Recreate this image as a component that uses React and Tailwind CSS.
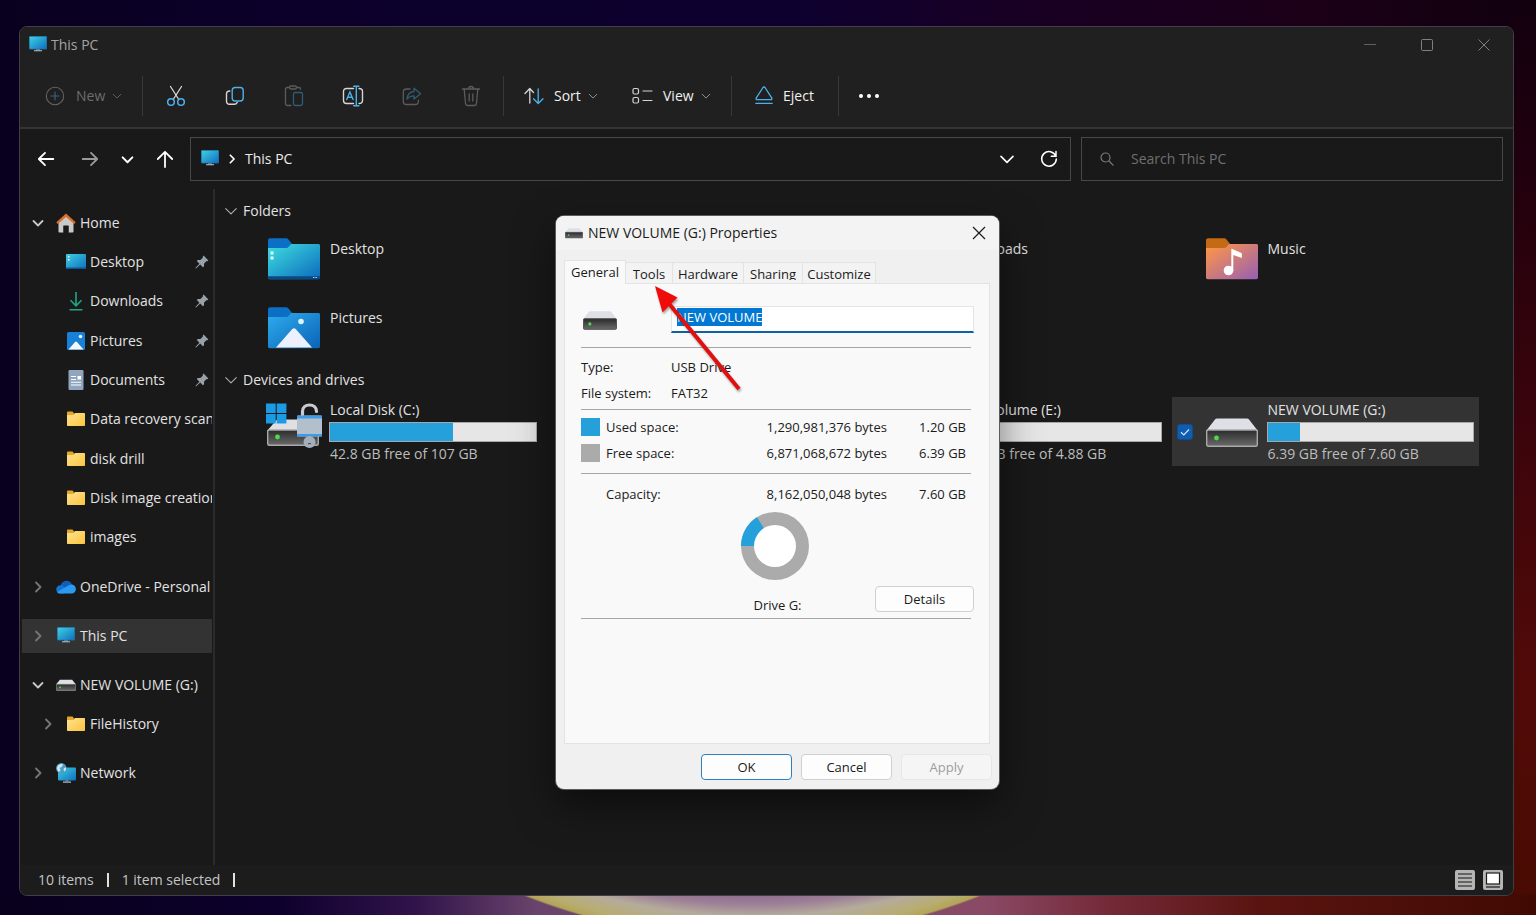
import React, { useEffect, useRef } from "react";

/* ---------- line icons ---------- */

const Chevron = ({ dir = "down", size = 12, width = 1, className = "" }) => (
  <svg
    width={size}
    height={size}
    viewBox="0 0 12 12"
    fill="none"
    stroke="currentColor"
    strokeWidth={width}
    strokeLinecap="round"
    strokeLinejoin="round"
    className={"shrink-0 " + className}
  >
    {dir === "down" ? <path d="M1.500 4 6 8.500 10.500 4" /> : <path d="M4 1.500 8.500 6 4 10.500" />}
  </svg>
);

const NewIcon = () => (
  <svg width="20" height="20" viewBox="0 0 20 20" fill="none">
    <circle cx="10" cy="10" r="8.700" stroke="#636363" strokeWidth="1.100" />
    <path d="M10 6v8M6 10h8" stroke="#35637d" strokeWidth="1.200" strokeLinecap="round" />
  </svg>
);

const CutIcon = () => (
  <svg width="20" height="22" viewBox="0 0 20 22" fill="none" strokeWidth="1.300" strokeLinecap="round">
    <path d="M4.500 1.500 12.800 14.500M15.500 1.500 7.200 14.500" stroke="#d6d6d6" />
    <circle cx="5" cy="17" r="3.300" stroke="#4cb1ea" strokeWidth="1.500" />
    <circle cx="15" cy="17" r="3.300" stroke="#4cb1ea" strokeWidth="1.500" />
  </svg>
);

const CopyIcon = () => (
  <svg width="20" height="20" viewBox="0 0 20 20" fill="none" strokeWidth="1.400" strokeLinecap="round">
    <path d="M4.800 5C2.500 5 1.500 6.200 1.500 8v7c0 2 1 3.300 3.200 3.300h4.500c1.500 0 2.500-.600 3-1.800" stroke="#d6d6d6" />
    <rect x="7.200" y="1.500" width="11" height="13.500" rx="3" stroke="#4cb1ea" />
  </svg>
);

const PasteIcon = () => (
  <svg width="20" height="22" viewBox="0 0 20 22" fill="none" strokeWidth="1.300" strokeLinecap="round">
    <path d="M5.500 2.500H3.300c-1 0-1.800.800-1.800 1.800v14.400c0 1 .800 1.800 1.800 1.800H7M12.500 2.500h2.200c1 0 1.800.800 1.800 1.800" stroke="#5c5c5c" />
    <rect x="5.500" y="1" width="7" height="3" rx="1.400" stroke="#5c5c5c" />
    <rect x="9.500" y="7.500" width="9" height="13" rx="1.800" stroke="#2f5b74" />
  </svg>
);

const RenameIcon = () => (
  <svg width="22" height="22" viewBox="0 0 22 22" fill="none" strokeWidth="1.400" strokeLinecap="round">
    <path d="M11.500 3.500H4.500c-1.800 0-3 1.200-3 3v9c0 1.800 1.200 3 3 3h7M17 3.500c2.300 0 3.500 1.200 3.500 3v9c0 1.800-1.200 3-3.500 3" stroke="#d6d6d6" />
    <path d="M11.700 1.300h5.200M14.300 1.300v19.400M11.700 20.700h5.200M4.700 14.600 7.900 7l3.200 7.600M5.700 12.300h4.400" stroke="#4cb1ea" />
  </svg>
);

const ShareIcon = () => (
  <svg width="20" height="20" viewBox="0 0 20 20" fill="none" strokeWidth="1.300" strokeLinecap="round" strokeLinejoin="round">
    <path d="M8 3H4.500c-2 0-3.200 1.200-3.200 3.200v9c0 2 1.200 3.300 3.200 3.300h8.700c2 0 3.200-1.300 3.200-3.300v-1" stroke="#5c5c5c" />
    <path d="M12 2.200 18.600 7.700 12 13v-3.100c-3 0-5.300 1-7 3.300.300-4.500 2.800-7.300 7-7.700z" stroke="#2f5b74" />
  </svg>
);

const TrashIcon = () => (
  <svg width="20" height="22" viewBox="0 0 20 22" fill="none" stroke="#5c5c5c" strokeWidth="1.300" strokeLinecap="round" strokeLinejoin="round">
    <path d="M1.500 4h17M7.500 3.800c0-1.500 1-2.300 2.500-2.300s2.500.800 2.500 2.300M3.200 4.300l1.300 14.200c.100 1.200.900 2 2 2h7c1.100 0 1.900-.800 2-2l1.300-14.200M8.200 9v7M11.800 9v7" />
  </svg>
);

const SortIcon = () => (
  <svg width="20" height="18" viewBox="0 0 20 18" fill="none" strokeWidth="1.300" strokeLinecap="round" strokeLinejoin="round">
    <path d="M5.800 16V2M1 6.500 5.800 1.500 9.500 5.500" stroke="#d6d6d6" />
    <path d="M14.200 2v14M9.500 11.800l4.700 4.700 4.800-4.700" stroke="#4cb1ea" />
  </svg>
);

const ViewIcon = () => (
  <svg width="21" height="18" viewBox="0 0 21 18" fill="none" stroke="#d6d6d6" strokeWidth="1.200" strokeLinecap="round">
    <rect x="1" y="1.500" width="5.500" height="5.500" rx="1.500" />
    <rect x="1" y="10.500" width="5.500" height="5.500" rx="1.500" />
    <path d="M11 4h9M11 13.500h9" />
  </svg>
);

const EjectIcon = () => (
  <svg width="18" height="20" viewBox="0 0 18 20" fill="none" stroke="#4cb1ea" strokeWidth="1.300" strokeLinecap="round" strokeLinejoin="round">
    <path d="M8 1.500 1.300 11.800c-.600 1 0 1.900 1 1.900h13.400c1 0 1.600-.900 1-1.900L10 1.500c-.500-.700-1.500-.700-2 0zM.800 17.300h16.400" />
  </svg>
);

const ArrowIcon = ({ dir }) => (
  <svg width="18" height="18" viewBox="0 0 18 18" fill="none" stroke="currentColor" strokeWidth="1.800" strokeLinecap="round" strokeLinejoin="round">
    {dir === "left" && <path d="M16.300 9H2M8 2.800 1.800 9 8 15.200" />}
    {dir === "right" && <path d="M1.700 9H16M10 2.800 16.200 9 10 15.200" />}
    {dir === "up" && <path d="M9 17V2M1.800 9 9 1.800 16.200 9" />}
  </svg>
);

const RefreshIcon = () => (
  <svg width="18" height="18" viewBox="0 0 18 18" fill="none" stroke="currentColor" strokeWidth="1.500" strokeLinecap="round">
    <path d="M15.800 6.200A7.300 7.300 0 1 0 16.300 9M16 1.500v4.800h-4.700" />
  </svg>
);

const SearchIcon = () => (
  <svg width="14" height="14" viewBox="0 0 14 14" fill="none" stroke="#7a7a7a" strokeWidth="1.200" strokeLinecap="round">
    <circle cx="5.500" cy="5.500" r="4.500" />
    <path d="m9 9 4 4.200" />
  </svg>
);

const PinIcon = () => (
  <svg width="14" height="14" viewBox="0 0 14 14" className="shrink-0" fill="#98a1a8">
    <path d="M8.600.600 13.400 5.400l-1.200.900-.900-.100L9 8.700l.100 2.500-1.200 1L5.200 9.600 1 13.600.400 13l4-4.200L1.800 6.100l1-1.200 2.500.100 2.500-2.300-.100-.900z" />
  </svg>
);

/* ---------- colour icons ---------- */

const MonitorIcon = ({ size = 20 }) => (
  <svg width={size} height={size} viewBox="0 0 20 20" className="shrink-0">
    <defs>
      <linearGradient id="screen" x1="0" y1="0" x2="1" y2="1">
        <stop offset="0" stopColor="#3fd0e0" />
        <stop offset="1" stopColor="#0f6fc2" />
      </linearGradient>
    </defs>
    <path d="M8 14h4v1.500H8z" fill="#7e8b93" />
    <path d="M6 15.300h8v1H6z" fill="#b9c4ca" />
    <rect x="1" y="1" width="18" height="13.500" rx="1" fill="#1b6d99" />
    <rect x="1.700" y="1.700" width="16.600" height="12.100" rx=".5" fill="url(#screen)" />
  </svg>
);

const HomeIcon = () => (
  <svg width="20" height="20" viewBox="0 0 20 20" className="shrink-0">
    <path d="M2.500 9.500 10 3l7.500 6.500v9.300a.7.7 0 0 1-.7.700H12.500V13h-5v6.500H3.200a.7.7 0 0 1-.7-.7z" fill="#c9c9c9" />
    <path d="M7.500 12.500h5v7h-5z" fill="#191919" />
    <path d="M10 .600 19.700 9.300l-1.500 1.800L10 4 1.800 11.100.300 9.300z" fill="#d9702a" />
  </svg>
);

const DesktopIcon = () => (
  <svg width="20" height="20" viewBox="0 0 20 20" className="shrink-0">
    <rect x="0" y="2" width="20" height="15" rx="1" fill="url(#screen)" />
    <path d="M2 4h1.500v1.500H2zM2 7h1.500v1.500H2z" fill="#dff" />
    <path d="M0 15.500h20v.500a1 1 0 0 1-1 1H1a1 1 0 0 1-1-1z" fill="#0a5596" />
  </svg>
);

const DownloadIcon = () => (
  <svg width="20" height="20" viewBox="0 0 20 20" className="shrink-0" fill="none" stroke="#1fa583" strokeWidth="1.600">
    <path d="M10 1v13.500M4.500 9.300l5.500 5.500 5.500-5.500M3.500 18.700h13" />
  </svg>
);

const PictureIcon = () => (
  <svg width="20" height="20" viewBox="0 0 20 20" className="shrink-0">
    <rect x="1" y="1" width="18" height="18" rx="1.500" fill="#1681d6" />
    <path d="m2.500 18.500 6.300-7.300a1.500 1.500 0 0 1 2.400 0l6.300 7.300z" fill="#f4f8ff" />
    <circle cx="14.500" cy="5.500" r="1.800" fill="#e9f6ff" />
  </svg>
);

const DocumentIcon = () => (
  <svg width="20" height="20" viewBox="0 0 20 20" className="shrink-0">
    <rect x="2.500" y="0" width="15" height="20" rx="1.200" fill="#8fa6be" />
    <path d="M5 6.500h5M5 9.500h5M5 12.300h10M5 15h10" stroke="#fff" strokeWidth="1.100" />
    <rect x="11.500" y="6" width="3.500" height="3.500" fill="#fff" />
  </svg>
);

const FolderIcon = () => (
  <svg width="20" height="20" viewBox="0 0 20 20" className="shrink-0">
    <defs>
      <linearGradient id="yellow" x1="0" y1="0" x2="1" y2="1">
        <stop offset="0" stopColor="#ffe391" />
        <stop offset="1" stopColor="#fbc43d" />
      </linearGradient>
    </defs>
    <path d="M1 3.500c0-.600.400-1 1-1h4.500L8.500 5v3H1z" fill="#e6a52b" />
    <path d="M1 6h6.500L9 4h9.300c.400 0 .700.300.700.700v11.600c0 .400-.300.700-.7.700H1.700a.7.7 0 0 1-.7-.7z" fill="url(#yellow)" />
  </svg>
);

const CloudIcon = () => (
  <svg width="20" height="20" viewBox="0 0 20 20" className="shrink-0">
    <path d="M4.500 8.500C5.500 5.500 7.800 3.700 10.500 3.700c2.500 0 4.600 1.400 5.500 3.800L10 13z" fill="#0f5fb8" />
    <path d="M.200 12.500c0-2.300 1.800-4.200 4.300-4.200 1.300 0 2 .300 3 1L14 13l-6 3.500H4.300c-2.300 0-4.100-1.700-4.100-4z" fill="#1474d0" />
    <path d="M16 7.400c2.300.300 3.900 2.200 3.900 4.600 0 2.600-1.900 4.500-4.400 4.500H4.300c-1.300 0-2.500-.600-3.200-1.600L11 9.200c1.400-1 3-1.900 5-1.800z" fill="#2b9af0" />
  </svg>
);

const NetworkIcon = () => (
  <svg width="20" height="20" viewBox="0 0 20 20" className="shrink-0">
    <path d="M7 18.500h8v1.200H7z" fill="#b9c4ca" />
    <path d="M9.500 17h3v1.500h-3z" fill="#7e8b93" />
    <rect x="2" y="4.500" width="18" height="13" rx="1" fill="url(#screen)" />
    <circle cx="5.300" cy="5.300" r="5.200" fill="#4f9cc4" />
    <path d="M2 2.500c1.500-1.500 3.500-2 5-1.300L6 3.700 3.500 5l1.200 2L3 9C1 7.500.300 4.500 2 2.500zM8 5l2-.500c.3 1.500-.2 3-1.300 4.200L7.500 7z" fill="#c9e8f4" />
  </svg>
);

const DriveIcon = ({ w = 20, dark = false }) => (
  <svg width={w} height={w} viewBox="0 0 52 52" className="shrink-0">
    <defs>
      <linearGradient id="drive" x1="0" y1="0" x2="0" y2="1">
        <stop offset="0" stopColor="#2b2b2b" />
        <stop offset="1" stopColor="#6a6a6a" />
      </linearGradient>
    </defs>
    <path d="M11 12.500h30c.800 0 1.400.300 2 .900L52 25H0l9-11.600c.600-.600 1.200-.900 2-.9z" fill="#dfe0e5" />
    <rect x=".7" y="24" width="50.600" height="16.300" rx="1.500" fill="url(#drive)" stroke={dark ? "#4a4a4a" : "#a9a9a9"} strokeWidth="1.400" />
    <circle cx="10.500" cy="32" r="2.400" fill="#4fdc4a" />
  </svg>
);

// system drive: windows badge on the left, open padlock on the right
const SystemDriveIcon = () => (
  <svg width="56" height="58" viewBox="0 6 56 58" className="shrink-0">
    <path d="M12 22.500h30c.800 0 1.400.300 2 .900L53 34H1l9-10.600c.600-.600 1.200-.900 2-.9z" fill="#dfe0e5" />
    <rect x="1.700" y="33" width="50.600" height="15.300" rx="1.500" fill="url(#drive)" stroke="#a9a9a9" strokeWidth="1.400" />
    <circle cx="11.500" cy="40" r="2.400" fill="#4fdc4a" />
    <path d="M0 6.500h9.700V16H0zM10.700 6.500h9.700V16h-9.700zM0 17h9.700v9.500H0zM10.700 17h9.700v9.500h-9.700z" fill="#1b9be6" />
    <path d="M36.500 19v-4.500c0-4 3-6.500 7-6.500s7 2.500 7 6.500" fill="none" stroke="#c8ccd2" strokeWidth="3.200" strokeLinecap="round" />
    <rect x="31" y="18.500" width="25" height="21" rx="1.500" fill="#b4bfcc" />
    <path d="M31 18.500h25v3H31zM31 37h25v2.500H31z" fill="#3f9be6" />
    <circle cx="43.500" cy="45" r="6" fill="#a5afba" />
    <path d="M42 46h3v1.200h-3z" fill="#4b535c" />
  </svg>
);

const folderSkins = {
  desktop: { tab: "#0c6fc6", from: "#39d3dc", to: "#0c69bd" },
  pictures: { tab: "#0c6fc6", from: "#2aa5e8", to: "#0b63b6" },
  music: { tab: "#c26a14", from: "#f9924e", to: "#955fb4" },
  downloads: { tab: "#13805f", from: "#2fc79a", to: "#118a6b" },
};

const BigFolder = ({ kind }) => {
  const skin = folderSkins[kind];
  return (
    <svg width="52" height="42" viewBox="0 0 52 42" className="shrink-0">
      <defs>
        <linearGradient id={"skin-" + kind} x1="0" y1="0" x2="1" y2="1">
          <stop offset="0.100" stopColor={skin.from} />
          <stop offset="1" stopColor={skin.to} />
        </linearGradient>
      </defs>
      <path d="M0 2.500C0 1 .900.300 2.200.300h15.500c1.200 0 2 .300 2.800 1.200L24 6v8H0z" fill={skin.tab} />
      <path d="M0 10h17.500c1.500 0 2.500-.400 3.500-1.500l1.800-2c.400-.400.800-.500 1.400-.500h26.300c.900 0 1.500.600 1.500 1.500v32c0 1-.700 1.700-1.700 1.700H1.700C.700 41.200 0 40.500 0 39.500z" fill={"url(#skin-" + kind + ")"} />
      {kind === "desktop" && (
        <>
          <path d="M0 38.200h52v1.300c0 1-.700 1.700-1.700 1.700H1.700C.700 41.200 0 40.500 0 39.500z" fill="#084a86" />
          <path d="M2.500 13.500h3v3h-3zM2.500 18.500h3v3h-3z" fill="#e8ffff" />
          <path d="M45 39h1.500v1H45zM47.500 39H49v1h-1.500z" fill="#9cd4f4" />
        </>
      )}
      {kind === "pictures" && (
        <>
          <path d="M8 40.500 24.300 22c1-1.100 2.400-1.100 3.400 0L44 40.500z" fill="#edf1ff" />
          <circle cx="33" cy="14.500" r="2.800" fill="#dcf6ff" />
        </>
      )}
      {kind === "music" && (
        <>
          <circle cx="22.500" cy="32.500" r="4.800" fill="#fff" />
          <path d="M25.300 33V11.500c0-.600.500-.900 1-.6l9 4.100c.300.200.500.400.500.800v4.200L27.300 17v16z" fill="#fff" />
        </>
      )}
    </svg>
  );
};

/* ---------- explorer window ---------- */

const Separator = () => <div className="mx-[3px] h-10 w-px bg-[#383838]" />;

const TitleBar = () => (
  <header className="flex h-9 items-center pl-2 text-[#a3a3a3]">
    <MonitorIcon size={20} />
    <span className="ml-[3px]">This PC</span>
    <div className="ml-auto flex text-[#808080]">
      <button aria-label="Minimize" className="flex w-[58px] items-center justify-center">
        <svg width="12" height="12" viewBox="0 0 12 12"><path d="M0 5.500h12" stroke="#606060" /></svg>
      </button>
      <button aria-label="Maximize" className="flex w-[56px] items-center justify-center">
        <svg width="12" height="12" viewBox="0 0 12 12" fill="none" stroke="currentColor"><rect x=".5" y=".5" width="11" height="11" rx="1" /></svg>
      </button>
      <button aria-label="Close" className="flex w-[58px] items-center justify-center">
        <svg width="12" height="12" viewBox="0 0 12 12" stroke="currentColor"><path d="M.5.500l11 11M11.500.500l-11 11" /></svg>
      </button>
    </div>
  </header>
);

const actions = [
  { name: "Cut", icon: <CutIcon /> },
  { name: "Copy", icon: <CopyIcon /> },
  { name: "Paste", icon: <PasteIcon />, disabled: true },
  { name: "Rename", icon: <RenameIcon /> },
  { name: "Share", icon: <ShareIcon />, disabled: true },
  { name: "Delete", icon: <TrashIcon />, disabled: true },
];

const Toolbar = () => (
  <div className="flex h-[66px] items-center border-b-2 border-[#343434] pt-0.5 text-[#f0f0f0]">
    <button disabled className="flex w-[119px] items-center pl-[25px] text-[#6e6e6e]">
      <NewIcon />
      <span className="ml-[11px]">New</span>
      <Chevron size={10} className="ml-[7px]" />
    </button>
    <Separator />
    {actions.map((a) => (
      <button key={a.name} aria-label={a.name} disabled={a.disabled} className="flex h-10 w-[59px] items-center justify-center">
        {a.icon}
      </button>
    ))}
    <Separator />
    <button className="flex w-[108px] items-center pl-[17px]">
      <SortIcon />
      <span className="ml-[10px]">Sort</span>
      <Chevron size={10} className="ml-[7px] text-[#a8a8a8]" />
    </button>
    <button className="flex w-[113px] items-center pl-[17px]">
      <ViewIcon />
      <span className="ml-[10px]">View</span>
      <Chevron size={10} className="ml-[7px] text-[#a8a8a8]" />
    </button>
    <Separator />
    <button className="flex w-[100px] items-center pl-[20px]">
      <EjectIcon />
      <span className="ml-[10px]">Eject</span>
    </button>
    <Separator />
    <button aria-label="See more" className="flex pl-[17px]">
      <svg width="20" height="4" viewBox="0 0 20 4" fill="#fff">
        <circle cx="2" cy="2" r="2" />
        <circle cx="10" cy="2" r="2" />
        <circle cx="18" cy="2" r="2" />
      </svg>
    </button>
  </div>
);

const AddressRow = () => (
  <div className="flex h-[60px] items-start pt-2 pr-[10px] pl-1 text-white">
    <nav className="flex h-11 items-center">
      <button aria-label="Back" className="flex w-11 justify-center"><ArrowIcon dir="left" /></button>
      <button aria-label="Forward" className="flex w-11 justify-center text-[#9a9a9a]"><ArrowIcon dir="right" /></button>
      <button aria-label="Recent locations" className="flex w-[30px] justify-center"><Chevron size={13} width={1.8} /></button>
      <button aria-label="Up" className="mr-0.5 flex w-[46px] justify-center"><ArrowIcon dir="up" /></button>
    </nav>
    <div className="mr-[10px] flex h-11 flex-1 items-center border border-[#484848] pl-[9px]">
      <MonitorIcon />
      <Chevron dir="right" size={10} width={2} className="ml-[7px]" />
      <span className="ml-2 text-[#ececec]">This PC</span>
      <button aria-label="Previous locations" className="ml-auto flex w-[42px] justify-center"><Chevron size={16} width={1.2} /></button>
      <button aria-label="Refresh" className="flex w-[42px] justify-center"><RefreshIcon /></button>
    </div>
    <label className="flex h-11 w-[422px] items-center border border-[#484848] pl-[18px]">
      <SearchIcon />
      <input
        type="text"
        placeholder="Search This PC"
        className="ml-[17px] min-w-0 flex-1 bg-transparent outline-none placeholder:text-[#6f6f6f]"
      />
    </label>
  </div>
);

const sidebar = [
  [
    { name: "Home", icon: <HomeIcon />, arrow: "down" },
    { name: "Desktop", icon: <DesktopIcon />, child: true, pin: true },
    { name: "Downloads", icon: <DownloadIcon />, child: true, pin: true },
    { name: "Pictures", icon: <PictureIcon />, child: true, pin: true },
    { name: "Documents", icon: <DocumentIcon />, child: true, pin: true },
    { name: "Data recovery scan", icon: <FolderIcon />, child: true },
    { name: "disk drill", icon: <FolderIcon />, child: true },
    { name: "Disk image creation", icon: <FolderIcon />, child: true },
    { name: "images", icon: <FolderIcon />, child: true },
  ],
  [{ name: "OneDrive - Personal", icon: <CloudIcon />, arrow: "right" }],
  [{ name: "This PC", icon: <MonitorIcon />, arrow: "right", active: true }],
  [
    { name: "NEW VOLUME (G:)", icon: <DriveIcon />, arrow: "down" },
    { name: "FileHistory", icon: <FolderIcon />, arrow: "right", child: true },
  ],
  [{ name: "Network", icon: <NetworkIcon />, arrow: "right" }],
];

const SidebarRow = ({ item }) => (
  <li className="flex min-h-[39px] items-center">
    <a
      href="#"
      className={
        "flex h-[34px] w-full items-center overflow-hidden whitespace-nowrap " +
        (item.child ? "pl-5 " : "pl-[10px] ") +
        (item.active ? "bg-[#333333]" : "")
      }
    >
      <span className="mr-3 w-3 shrink-0">
        {item.arrow && (
          <Chevron dir={item.arrow} width={1.8} className={item.arrow === "down" ? "text-[#c8c8c8]" : "text-[#777777]"} />
        )}
      </span>
      {item.icon}
      <span className="ml-1">{item.name}</span>
      {item.pin && (
        <span className="mr-[3px] ml-auto">
          <PinIcon />
        </span>
      )}
    </a>
  </li>
);

const Sidebar = () => (
  <aside className="flex w-[195px] shrink-0 flex-col gap-[10px] border-r-2 border-[#2b2b2b] pt-[14px] pr-px pl-0.5">
    {sidebar.map((group, i) => (
      <ul key={i} className={i === 0 ? "grid h-[354px] auto-rows-fr grid-cols-1" : ""}>
        {group.map((item) => (
          <SidebarRow key={item.name} item={item} />
        ))}
      </ul>
    ))}
  </aside>
);

const folders = [
  { name: "Desktop", kind: "desktop", col: "col-start-1" },
  { name: "Downloads", kind: "downloads", col: "col-start-3" },
  { name: "Music", kind: "music", col: "col-start-4" },
  { name: "Pictures", kind: "pictures", col: "col-start-1" },
];

const drives = [
  { name: "Local Disk (C:)", info: "42.8 GB free of 107 GB", used: 60, system: true, col: "col-start-1" },
  { name: "New Volume (E:)", info: "4.85 GB free of 4.88 GB", used: 1, col: "col-start-3" },
  { name: "NEW VOLUME (G:)", info: "6.39 GB free of 7.60 GB", used: 16, selected: true, col: "col-start-4" },
];

const SectionTitle = ({ children }) => (
  <h2 className="flex h-7 items-center pl-[9px]">
    <Chevron size={14} width={0.9} className="mr-[5px] text-[#b0b0b0]" />
    {children}
  </h2>
);

const DriveTile = ({ drive }) => (
  <div className={"flex h-[69px] items-center pr-[5px] pl-[5px] " + drive.col + (drive.selected ? " bg-[#333333]" : "")}>
    <div className="mr-[13px] w-4 shrink-0">
      {drive.selected && (
        <label className="relative block h-4 w-4">
          <input
            type="checkbox"
            defaultChecked
            aria-label={drive.name}
            className="block h-4 w-4 appearance-none rounded-[3px] border border-[#0a4f96] bg-[#0f5cb0]"
          />
          <svg width="10" height="10" viewBox="0 0 10 10" className="absolute top-[3px] left-[3px]" fill="none" stroke="#d5e6f7" strokeWidth="1.200">
            <path d="M1 5.300 3.800 8 9 2.500" />
          </svg>
        </label>
      )}
    </div>
    <div className="mr-[9px] w-[52px] shrink-0">
      {drive.system ? (
        <div className="-ml-0.5 w-[56px]">
          <SystemDriveIcon />
        </div>
      ) : (
        <DriveIcon w={52} />
      )}
    </div>
    <div className="min-w-0 flex-1 leading-5">
      <div className="pl-px">{drive.name}</div>
      <div className="my-0.5 h-5 border border-[#a8a8a8] bg-[#e6e6e6]">
        <div className="h-full bg-[#26a0da]" style={{ width: drive.used + "%" }} />
      </div>
      <div className="pl-px text-[#bdbdbd]">{drive.info}</div>
    </div>
  </div>
);

const Files = () => (
  <main className="min-w-0 flex-1 pt-2">
    <section>
      <SectionTitle>Folders</SectionTitle>
      <div className="grid grid-cols-4 gap-x-[5px] pr-[34px] pl-[19px]">
        {folders.map((f) => (
          <div key={f.name} className={"flex h-[69px] gap-[10px] pt-[13px] pl-[34px] " + f.col}>
            <BigFolder kind={f.kind} />
            <span className="leading-[22px]">{f.name}</span>
          </div>
        ))}
      </div>
    </section>
    <section className="pt-[3px]">
      <SectionTitle>Devices and drives</SectionTitle>
      <div className="grid grid-cols-4 gap-x-[5px] pt-[3px] pr-[34px] pl-[19px]">
        {drives.map((d) => (
          <DriveTile key={d.name} drive={d} />
        ))}
      </div>
    </section>
  </main>
);

const StatusBar = () => (
  <footer className="flex h-[30px] items-center bg-[#1c1c1c] pr-[10px] pl-[18px] text-[#c4c4c4]">
    <span>10 items</span>
    <span className="mx-[13px] h-[14px] w-0.5 bg-[#e0e0e0]" />
    <span>1 item selected</span>
    <span className="mx-[13px] h-[14px] w-0.5 bg-[#e0e0e0]" />
    <button aria-label="Details view" className="mr-2 ml-auto">
      <svg width="20" height="20" viewBox="0 0 20 20">
        <rect width="20" height="20" rx="2" fill="#b5b5b5" />
        <path d="M3 4h14M3 8h14M3 12h14M3 16h14" stroke="#4a4a4a" strokeWidth="1.300" />
      </svg>
    </button>
    <button aria-label="Large icons view">
      <svg width="20" height="20" viewBox="0 0 20 20">
        <rect width="20" height="20" rx="2" fill="#b5b5b5" />
        <rect x="3.500" y="3" width="13" height="11" fill="#fff" stroke="#1c1c1c" strokeWidth="1.200" />
        <path d="M3 17h14" stroke="#3a3a3a" strokeWidth="1.300" />
      </svg>
    </button>
  </footer>
);

/* ---------- properties dialog ---------- */

const tabs = [
  { name: "Tools", w: "w-[47px]" },
  { name: "Hardware", w: "w-[71px]" },
  { name: "Sharing", w: "w-[59px]" },
  { name: "Customize", w: "w-[73px]" },
];

const spaces = [
  { name: "Used space:", bytes: "1,290,981,376 bytes", gb: "1.20 GB", swatch: "bg-[#26a0da]" },
  { name: "Free space:", bytes: "6,871,068,672 bytes", gb: "6.39 GB", swatch: "bg-[#ababab]" },
];

const Rule = ({ className = "" }) => <hr className={"mr-[3px] border-t border-[#a6a6a6] " + className} />;

const PropertiesDialog = () => {
  const nameRef = useRef(null);

  useEffect(() => {
    nameRef.current.focus();
    nameRef.current.select();
  }, []);

  return (
    <div
      role="dialog"
      aria-label="NEW VOLUME (G:) Properties"
      className="absolute top-[216px] left-[556px] flex h-[573px] w-[443px] flex-col rounded-lg bg-[#f0f0f0] text-[13px] text-[#1b1b1b] shadow-[0_0_0_1px_#5a5a5a,0_16px_40px_rgba(0,0,0,0.5)]"
    >
      <div className="flex h-[34px] shrink-0 items-center rounded-t-lg bg-[#f3f3f3] pr-[13px] pl-[9px] text-sm">
        <DriveIcon w={18} dark />
        <span className="ml-[5px]">NEW VOLUME (G:) Properties</span>
        <button aria-label="Close" className="ml-auto">
          <svg width="14" height="14" viewBox="0 0 14 14" stroke="#1b1b1b" strokeWidth="1.200"><path d="M1 1l12 12M13 1 1 13" /></svg>
        </button>
      </div>

      <div role="tablist" className="flex h-[33px] shrink-0 items-end pl-2">
        <button role="tab" aria-selected="true" className="relative z-10 -mb-px h-6 w-[62px] border border-b-0 border-[#e3e3e3] bg-[#f9f9f9]">
          General
        </button>
        {tabs.map((t) => (
          <button key={t.name} role="tab" className={"flex h-[21px] items-start justify-center border border-b-0 border-l-0 border-[#e3e3e3] bg-[#f3f3f3] pt-px " + t.w}>
            <span className="block h-4 overflow-hidden leading-5">{t.name}</span>
          </button>
        ))}
      </div>

      <div className="mr-[9px] ml-2 flex-1 border border-[#e3e3e3] bg-[#f9f9f9] pt-[22px] pr-[15px] pl-4">
        <div className="flex h-[27px] items-center">
          <div className="w-[90px] shrink-0 pl-0.5">
            <DriveIcon w={34} dark />
          </div>
          <input
            ref={nameRef}
            type="text"
            aria-label="Volume name"
            defaultValue="NEW VOLUME"
            className="h-[27px] min-w-0 flex-1 border border-b-2 border-[#e5e5e5] border-b-[#0b63a5] bg-white pb-1 pl-[5px] outline-none selection:bg-[#0078d4] selection:text-white"
          />
        </div>
        <Rule className="mt-[14px] mb-[6px]" />
        <dl className="grid grid-cols-[90px_1fr] leading-[26px]">
          <dt>Type:</dt>
          <dd>USB Drive</dd>
          <dt>File system:</dt>
          <dd>FAT32</dd>
        </dl>
        <Rule className="mt-[3px] mb-1" />
        <table className="w-full">
          <tbody>
            {spaces.map((s) => (
              <tr key={s.name} className="h-[26px]">
                <td className="w-[25px]">
                  <div className={"h-[18px] w-[19px] " + s.swatch} />
                </td>
                <th scope="row" className="text-left font-normal">{s.name}</th>
                <td className="text-right">{s.bytes}</td>
                <td className="w-[87px] pr-2 text-right">{s.gb}</td>
              </tr>
            ))}
            <tr className="h-[15px]">
              <td colSpan={4}><Rule /></td>
            </tr>
            <tr className="h-[26px]">
              <td />
              <th scope="row" className="text-left font-normal">Capacity:</th>
              <td className="text-right">8,162,050,048 bytes</td>
              <td className="pr-2 text-right">7.60 GB</td>
            </tr>
          </tbody>
        </table>
        <div className="flex justify-center pt-[5px] pr-[6px]">
          <svg width="68" height="68" viewBox="0 0 68 68">
            <circle cx="34" cy="34" r="34" fill="#ababab" />
            <path d="M34 34H0A34 34 0 0 1 16 5.200z" fill="#26a0da" />
            <circle cx="34" cy="34" r="21" fill="#fff" />
          </svg>
        </div>
        <div className="mt-[6px] grid h-[29px] grid-cols-[1fr_auto_1fr]">
          <span className="col-start-2 self-end leading-5">Drive G:</span>
          <button className="h-[26px] w-[99px] justify-self-end rounded border border-[#d0d0d0] bg-[#fdfdfd]">Details</button>
        </div>
        <Rule className="mt-[3px]" />
      </div>

      <div className="flex h-[45px] shrink-0 gap-[9px] pt-[10px] pr-[7px]">
        <button className="ml-auto h-[26px] w-[91px] rounded border border-[#2d7fc0] bg-[#fdfdfd]">OK</button>
        <button className="h-[26px] w-[91px] rounded border border-[#d0d0d0] bg-[#fdfdfd]">Cancel</button>
        <button disabled className="h-[26px] w-[91px] rounded border border-[#e7e7e7] bg-[#f5f5f5] text-[#9d9d9d]">Apply</button>
      </div>
    </div>
  );
};

// red pointer towards the Tools tab
const Pointer = () => (
  <svg width="100" height="116" viewBox="0 0 100 116" className="pointer-events-none absolute top-[280px] left-[648px] z-20 drop-shadow-[1px_2px_1px_rgba(0,0,0,0.35)]">
    <path d="M18 20 91 109" stroke="#e01010" strokeWidth="4" strokeLinecap="butt" />
    <path d="M7 6 29.500 17.500 14.500 32.500z" fill="#f00a0a" />
  </svg>
);

const Wallpaper = () => (
  <div aria-hidden="true" className="absolute inset-0 -z-10 bg-[linear-gradient(90deg,#09001f_0%,#0c002b_20%,#0d002f_52%,#180025_65%,#1c0018_85%,#10000e_100%)]">
    <div className="absolute inset-y-0 right-0 w-[26px] bg-[linear-gradient(180deg,#12000f_0%,#22000d_20%,#3a040c_45%,#520a08_75%,#480b02_100%)]" />
    <div className="absolute inset-x-0 bottom-0 h-[21px] bg-[radial-gradient(circle_at_49%_-575px,#8d648f_572px,#9c7f96_585px,#b5ab9c_597px,#b8ad70_612px,#b3a456_619px,transparent_621px),linear-gradient(90deg,#08001c_0%,#0d002c_18%,#30134a_27%,#6a446c_35%,#8a4a66_64%,#752a38_72%,#5a1410_82%,#400a02_100%)]" />
  </div>
);

const App = () => (
  <div className="relative isolate flex min-h-screen flex-col overflow-hidden pt-[26px] pr-[22px] pb-[19px] pl-[19px] font-['Open_Sans','Noto_Sans',sans-serif] text-sm text-[#e2e2e2]">
    <Wallpaper />
    <div className="flex flex-1 flex-col overflow-hidden rounded-lg border border-[#443c48] bg-[#191919]">
      <div className="bg-[#202020]">
        <TitleBar />
        <Toolbar />
      </div>
      <AddressRow />
      <div className="flex flex-1">
        <Sidebar />
        <Files />
      </div>
      <StatusBar />
    </div>
    <PropertiesDialog />
    <Pointer />
  </div>
);

export default App;
